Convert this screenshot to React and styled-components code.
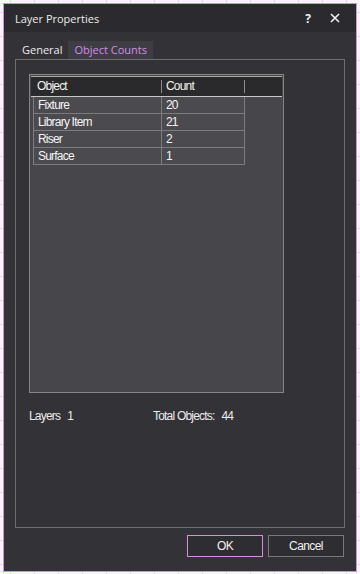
import React from 'react'
import styled, { createGlobalStyle } from 'styled-components'

const GlobalStyle = createGlobalStyle`
  html, body {
    margin: 0;
    padding: 0;
  }
  body {
    width: 360px;
    height: 574px;
    overflow: hidden;
    background-color: #f6f6f6;
    background-image:
      linear-gradient(#dedede 1px, transparent 1px),
      linear-gradient(90deg, #dedede 1px, transparent 1px);
    background-size: 24px 24px;
    background-position: 10px 12px;
  }
  * { box-sizing: border-box; }
`

const rows = [
  { name: 'Fixture', count: 20 },
  { name: 'Library Item', count: 21 },
  { name: 'Riser', count: 2 },
  { name: 'Surface', count: 1 },
]

function App() {
  return (
    <>
      <GlobalStyle />
      <Dialog>
        <TitleBar>
          <Title>Layer Properties</Title>
          <TitleButtons>
            <Help>?</Help>
            <CloseIcon width="10" height="10" viewBox="0 0 10 10">
              <path d="M1 1 L9 9 M9 1 L1 9" stroke="#f2f2f2" strokeWidth="1.6" />
            </CloseIcon>
          </TitleButtons>
        </TitleBar>
        <Body>
          <Tabs>
            <Tab>General</Tab>
            <Tab active>Object Counts</Tab>
          </Tabs>
          <Panel>
            <ListView>
              <Header>
                <HeadCell width={129}>Object</HeadCell>
                <HeadCell width={83}>Count</HeadCell>
              </Header>
              <Table>
                {rows.map((r) => (
                  <Row key={r.name}>
                    <Cell width={128}>{r.name}</Cell>
                    <Cell width={83}>{r.count}</Cell>
                  </Row>
                ))}
              </Table>
            </ListView>
            <Summary>
              <Stat width={124}>
                <Label>Layers</Label>
                <Value>1</Value>
              </Stat>
              <Stat>
                <Label>Total Objects:</Label>
                <Value>44</Value>
              </Stat>
            </Summary>
          </Panel>
          <Footer>
            <Button primary>OK</Button>
            <Button>Cancel</Button>
          </Footer>
        </Body>
      </Dialog>
    </>
  )
}

export default App

const Dialog = styled.div`
  margin: 3px 0 0 3px;
  width: 354px;
  height: 569px;
  border: 1px solid #d58ee0;
  background: #333237;
  display: flex;
  flex-direction: column;
`

const TitleBar = styled.div`
  height: 28px;
  background: #2b2a2e;
  display: flex;
  align-items: center;
  justify-content: space-between;
  padding: 0 16px 0 11px;
`

const Title = styled.div`
  font-family: "Open Sans", "Noto Sans", sans-serif;
  font-size: 11px;
  color: #ececec;
`

const TitleButtons = styled.div`
  display: flex;
  align-items: center;
  gap: 19px;
`

const Help = styled.span`
  font-family: "Open Sans", sans-serif;
  font-size: 12px;
  font-weight: 700;
  color: #f0f0f0;
`

const CloseIcon = styled.svg`
  display: block;
`

const Body = styled.div`
  flex: 1;
  display: flex;
  flex-direction: column;
  padding: 9px 11px 14px 11px;
`

const Tabs = styled.div`
  display: flex;
  height: 18px;
  padding-left: 1px;
`

const Tab = styled.div`
  font-family: "Open Sans", "Noto Sans", sans-serif;
  font-size: 11px;
  line-height: 18px;
  padding: 0 6px;
  color: ${(p) => (p.active ? '#d48ce8' : '#ececec')};
  background: ${(p) => (p.active ? '#3e3d43' : 'transparent')};
`

const Panel = styled.div`
  flex: 1;
  border: 1px solid #6e6e70;
  padding: 14px 13px;
  display: flex;
  flex-direction: column;
`

const ListView = styled.div`
  width: 255px;
  height: 319px;
  border: 1px solid #858585;
  background: #47464b;
  padding: 1px 1px 0 1px;
`

const Header = styled.div`
  height: 21px;
  background: #2a2a2c;
  border-top: 1px solid #a8a8a8;
  border-bottom: 1px solid #c8c8c8;
  display: flex;
  padding-left: 2px;
`

const HeadCell = styled.div`
  width: ${(p) => p.width}px;
  font-family: "Liberation Sans", Arial, sans-serif;
  font-size: 12px;
  letter-spacing: -0.8px;
  color: #f2f2f2;
  line-height: 19px;
  padding-left: 4px;
  position: relative;
  &::after {
    content: '';
    position: absolute;
    right: 0;
    top: 3px;
    height: 13px;
    width: 1px;
    background: #8c8c8c;
  }
`

const Table = styled.div`
  margin-left: 2px;
  display: flex;
  flex-direction: column;
  width: 212px;
  border-left: 1px solid #7c7c7c;
`

const Row = styled.div`
  display: flex;
  height: 17px;
  border-bottom: 1px solid #7c7c7c;
`

const Cell = styled.div`
  width: ${(p) => p.width}px;
  background: #4b4a4f;
  border-right: 1px solid #7c7c7c;
  font-family: "Liberation Sans", Arial, sans-serif;
  font-size: 12px;
  letter-spacing: -0.8px;
  color: #f4f4f4;
  line-height: 16px;
  padding-left: 4px;
`

const Summary = styled.div`
  display: flex;
  margin-top: 16px;
`

const Stat = styled.div`
  display: flex;
  gap: 7px;
  width: ${(p) => (p.width ? `${p.width}px` : 'auto')};
  font-family: "Liberation Sans", Arial, sans-serif;
  font-size: 12px;
  letter-spacing: -0.8px;
  color: #ececec;
`

const Label = styled.span``

const Value = styled.span``

const Footer = styled.div`
  display: flex;
  justify-content: flex-end;
  gap: 5px;
  margin-top: 7px;
  padding-right: 1px;
`

const Button = styled.button`
  width: 76px;
  height: 22px;
  background: #2e2d31;
  border: 1px solid ${(p) => (p.primary ? '#d98ce2' : '#7a7a7c')};
  color: #f0f0f0;
  font-family: "Liberation Sans", Arial, sans-serif;
  font-size: 12px;
  letter-spacing: -0.6px;
  padding: 0;
`
